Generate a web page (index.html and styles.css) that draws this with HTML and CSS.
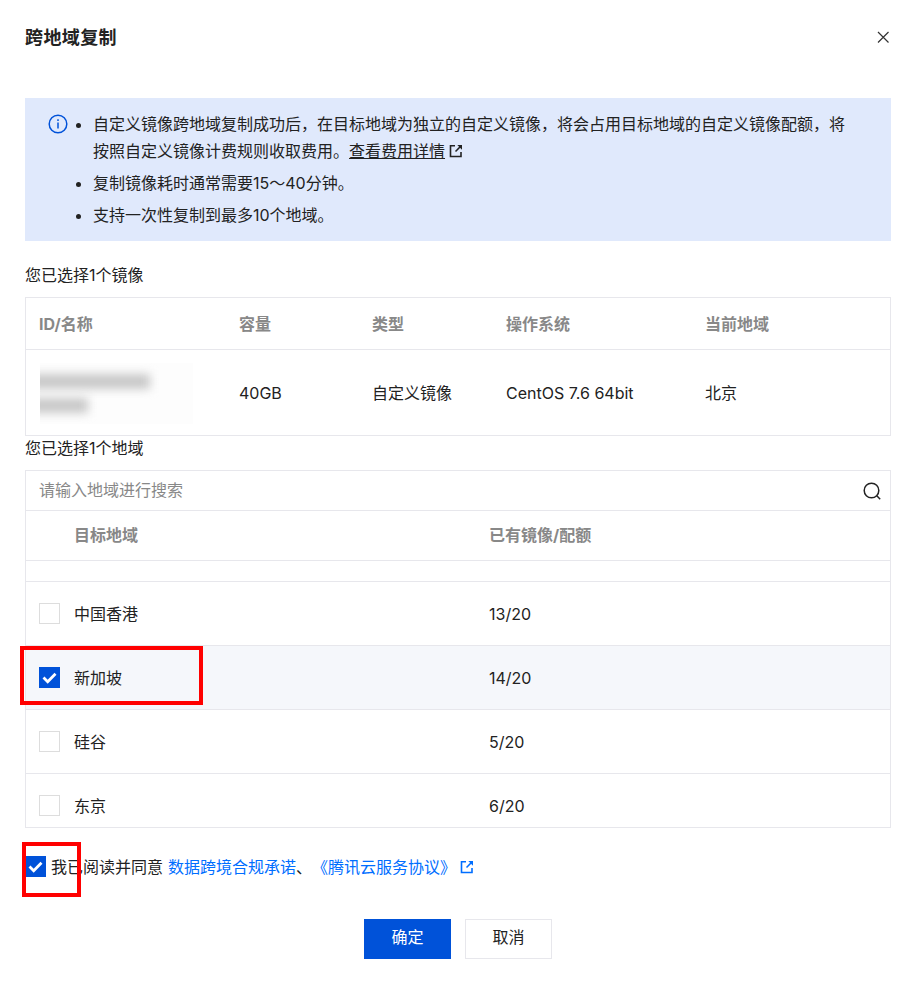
FILE: index.html
```html
<!DOCTYPE html>
<html lang="zh-CN">

<head>
  <meta charset="utf-8">
  <title>跨地域复制</title>
  <link rel="stylesheet" href="styles.css">
</head>

<body>
  <div class="dialog">
    <div class="dialog-head">
      <h1 class="dialog-title">跨地域复制</h1>
      <svg class="close-icon" width="16" height="16" viewBox="0 0 16 16" fill="none" stroke="#333" stroke-width="1.2">
        <path d="M3 3l10.500 10.500M13.500 3L3 13.500" />
      </svg>
    </div>

    <div class="alert">
      <svg class="info-icon" width="20" height="20" viewBox="0 0 20 20" fill="none" stroke="#0052d9" stroke-width="1.5">
        <circle cx="10" cy="10" r="8.800" />
        <path d="M10 8.500v6" />
        <path d="M10 5.200v1.700" />
      </svg>
      <ul class="alert-list">
        <li>自定义镜像跨地域复制成功后，在目标地域为独立的自定义镜像，将会占用目标地域的自定义镜像配额，将按照自定义镜像计费规则收取费用。<a class="alert-link">查看费用详情</a><svg class="ext-icon" width="14" height="14" viewBox="0 0 14 14" fill="none" stroke="currentColor" stroke-width="1.600">
            <path d="M6 1.800H1.500v10.700H12V8" />
            <path d="M12.200 1.800L6.500 7.500" />
            <path d="M8.300 1h4.700v4.700z" fill="currentColor" stroke="none" />
          </svg>
        </li>
        <li>复制镜像耗时通常需要15～40分钟。</li>
        <li>支持一次性复制到最多10个地域。</li>
      </ul>
    </div>

    <p class="label label-image">您已选择1个镜像</p>
    <div class="box image-table">
      <div class="image-row image-head">
        <span>ID/名称</span>
        <span>容量</span>
        <span>类型</span>
        <span>操作系统</span>
        <span>当前地域</span>
      </div>
      <div class="image-row image-body">
        <span class="blurred">
          <i class="blur-line blur-long"></i>
          <i class="blur-line blur-short"></i>
        </span>
        <span>40GB</span>
        <span>自定义镜像</span>
        <span>CentOS 7.6 64bit</span>
        <span>北京</span>
      </div>
    </div>

    <p class="label label-region">您已选择1个地域</p>
    <div class="box region-table">
      <div class="search">
        <span class="search-text">请输入地域进行搜索</span>
        <svg width="20" height="20" viewBox="0 0 20 20" fill="none" stroke="#222" stroke-width="1.500">
          <circle cx="9.500" cy="9.500" r="7.300" />
          <path d="M14.800 14.800l3.400 3.400" />
        </svg>
      </div>
      <div class="region-row region-head">
        <span>目标地域</span>
        <span>已有镜像/配额</span>
      </div>
      <div class="region-gap"></div>
      <div class="region-row">
        <span class="region-name"><i class="check"></i>中国香港</span>
        <span>13/20</span>
      </div>
      <div class="region-row selected">
        <span class="region-name">
          <i class="check checked">
            <svg width="21" height="21" viewBox="0 0 21 21" fill="none" stroke="#fff" stroke-width="2.800">
              <path d="M4.500 10.500l4.200 4.200 7.800-7.900" />
            </svg>
          </i>新加坡
        </span>
        <span>14/20</span>
      </div>
      <div class="region-row">
        <span class="region-name"><i class="check"></i>硅谷</span>
        <span>5/20</span>
      </div>
      <div class="region-row">
        <span class="region-name"><i class="check"></i>东京</span>
        <span>6/20</span>
      </div>
    </div>

    <div class="agree">
      <i class="check checked">
        <svg width="21" height="21" viewBox="0 0 21 21" fill="none" stroke="#fff" stroke-width="2.800">
          <path d="M4.500 10.500l4.200 4.200 7.800-7.900" />
        </svg>
      </i>
      <span>我已阅读并同意</span>
      <a class="link first-link">数据跨境合规承诺</a><span>、</span><a class="link">《腾讯云服务协议》</a>
      <svg class="ext-icon link" width="14" height="14" viewBox="0 0 14 14" fill="none" stroke="currentColor" stroke-width="1.600">
        <path d="M6 1.800H1.500v10.700H12V8" />
        <path d="M12.200 1.800L6.500 7.500" />
        <path d="M8.300 1h4.700v4.700z" fill="currentColor" stroke="none" />
      </svg>
    </div>

    <div class="actions">
      <button class="btn btn-primary">确定</button>
      <button class="btn">取消</button>
    </div>
  </div>

  <div class="mark mark-region"></div>
  <div class="mark mark-agree"></div>
</body>

</html>
```

FILE: styles.css
```css
body {
  margin: 0;
  background: #fff;
  color: #222;
  font-family: Inter, "Noto Sans CJK SC", sans-serif;
  font-size: 16px;
  line-height: 24px;
}

.dialog {
  padding: 0 31px 25px 25px;
}

.dialog-head {
  display: flex;
  justify-content: space-between;
  align-items: center;
  height: 76px;
  margin-bottom: 22px;
}

.dialog-title {
  margin: 0;
  font-size: 18px;
  font-weight: 700;
  letter-spacing: 0.4px;
}

.close-icon {
  margin-bottom: 2px;
}

.alert {
  display: flex;
  width: 866px;
  height: 143px;
  box-sizing: border-box;
  padding: 13px 35px 13px 23px;
  background: #e0e9fc;
}

.info-icon {
  flex: none;
  margin-top: 3px;
}

.alert-list {
  margin: 0;
  padding: 0 0 0 25px;
  line-height: 27px;
}

.alert-list li {
  margin-bottom: 5px;
}

.alert-link {
  text-decoration: underline;
}

.ext-icon {
  margin-left: 4px;
  vertical-align: -1px;
}

.label {
  margin: 0;
}

.label-image {
  margin: 22px 0 10px;
}

.label-region {
  margin: 0 0 10px;
}

.box {
  width: 866px;
  box-sizing: border-box;
  border: 1px solid #e7e7ec;
}

.image-table {
  height: 139px;
}

.image-row {
  display: grid;
  grid-template-columns: 200px 133px 134px 199px 1fr;
  align-items: center;
  padding-left: 13px;
}

.image-head {
  height: 51px;
  border-bottom: 1px solid #e7e7ec;
  color: #888;
  font-weight: 700;
}

.image-body {
  height: 86px;
}

.blurred {
  display: flex;
  flex-direction: column;
  gap: 9px;
  width: 153px;
  height: 61px;
  box-sizing: border-box;
  margin-left: 1px;
  padding-top: 11px;
  overflow: hidden;
  background: #fdfdfd;
}

.blur-line {
  display: block;
  flex: none;
  height: 15px;
  margin-left: -10px;
  background: #c8c8c8;
  filter: blur(5px);
}

.blur-long {
  width: 120px;
}

.blur-short {
  width: 58px;
}

.region-table {
  height: 358px;
  overflow: hidden;
}

.search {
  display: flex;
  justify-content: space-between;
  align-items: center;
  height: 39px;
  padding: 0 8px 0 13px;
  border-bottom: 1px solid #e7e7ec;
}

.search-text {
  padding-bottom: 2px;
  color: #888;
}

.region-row {
  display: grid;
  grid-template-columns: 450px 1fr;
  align-items: center;
  height: 63px;
  padding-left: 13px;
  border-bottom: 1px solid #e7e7ec;
}

.region-head {
  height: 47px;
  padding-bottom: 2px;
  padding-left: 48px;
  grid-template-columns: 415px 1fr;
  color: #888;
  font-weight: 700;
}

.region-gap {
  height: 20px;
  border-bottom: 1px solid #e7e7ec;
}

.region-name {
  display: flex;
  align-items: center;
  gap: 14px;
}

.selected {
  background: #f5f7fb;
}

.check {
  display: block;
  flex: none;
  width: 21px;
  height: 21px;
  box-sizing: border-box;
  border: 1px solid #ddd;
  background: #fff;
}

.check.checked {
  border: none;
  background: #0052d9;
}

.check svg {
  display: block;
}

.agree {
  display: flex;
  align-items: center;
  height: 23px;
  margin-top: 27px;
}

.agree .check {
  margin-right: 5px;
}

.link {
  color: #006eff;
}

.first-link {
  margin-left: 5px;
}

.btn {
  width: 87px;
  height: 40px;
  padding: 0 0 4px;
  border: 1px solid #e7e7ec;
  background: #fff;
  color: #222;
  font: inherit;
}

.btn-primary {
  border: none;
  background: #0052d9;
  color: #fff;
}

.actions {
  display: flex;
  justify-content: center;
  gap: 14px;
  margin-top: 41px;
}

.mark {
  position: absolute;
  box-sizing: border-box;
  border: 4px solid #f00;
}

.mark-region {
  left: 20px;
  top: 646px;
  width: 183px;
  height: 59px;
}

.mark-agree {
  left: 22px;
  top: 842px;
  width: 59px;
  height: 55px;
}
```
